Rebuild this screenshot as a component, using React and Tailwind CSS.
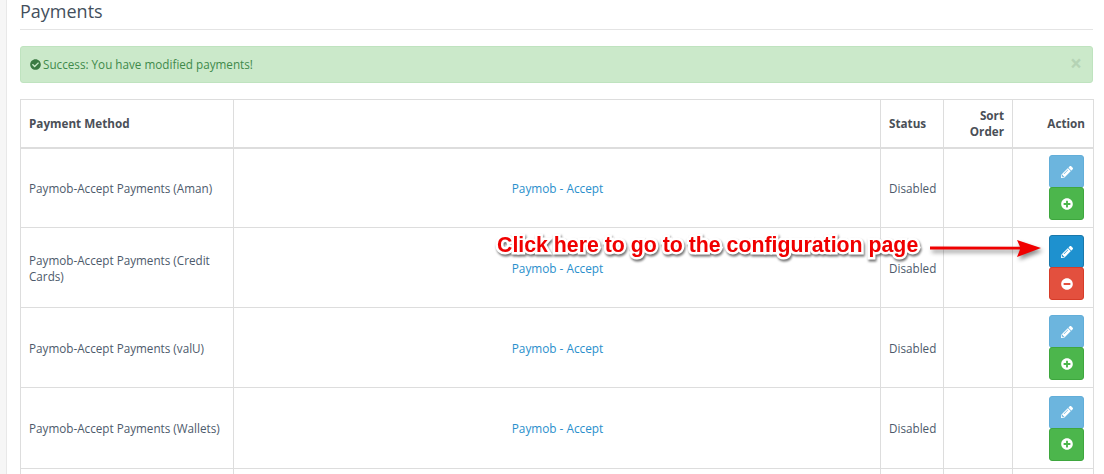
import React from "react";
import { FaPencilAlt, FaPlusCircle, FaMinusCircle, FaCheckCircle } from "react-icons/fa";

const cell = "border border-[#dddddd] px-2 py-[6px] align-middle";
const low = "border border-[#dddddd] px-2 pt-[8px] pb-[6px] align-middle";

function Btn({ tone, icon: Icon, size = 12 }) {
  const tones = {
    light: "bg-[#6cb5de] border-[#62aed9]",
    blue: "bg-[#1e91cf] border-[#1978ab]",
    green: "bg-[#4cb64c] border-[#3ea73e]",
    red: "bg-[#e3503e] border-[#d63c29]",
  };
  return (
    <div className={`flex h-[33px] w-[35px] items-center justify-center rounded-[3px] border text-white ${tones[tone]} -mt-px first:mt-0`}>
      <Icon size={size} />
    </div>
  );
}

function Row({ name, active, h }) {
  return (
    <tr style={{ height: h }}>
      <td className={`${cell} leading-[16px]`}>{name}</td>
      <td className={`${low} text-center text-[11.8px] text-[#2a8fcc]`}>
        <span className="pl-px">Paymob - Accept</span>
      </td>
      <td className={low}>Disabled</td>
      <td className={cell}></td>
      <td className="border border-[#dddddd] pl-2 pr-[9px] py-[6px] align-middle">
        <div className="flex flex-col items-end">
          <Btn tone={active ? "blue" : "light"} icon={FaPencilAlt} />
          <Btn tone={active ? "red" : "green"} icon={active ? FaMinusCircle : FaPlusCircle} />
        </div>
      </td>
    </tr>
  );
}

export default function App() {
  return (
    <div className="relative h-[474px] w-[1104px] overflow-hidden bg-white font-['Open_Sans',sans-serif] text-[11.7px] text-[#4d5a6b]">
      <div className="flex h-full">
        <div className="h-full w-[7px] shrink-0 border-r border-[#e8e8e8] bg-[#f6f6f6]"></div>
        <div className="min-w-0 flex-1 pl-[13px] pr-[11px]">
          <div className="h-[30px] border-b border-[#e4e4e4]">
            <h1 className="text-[18px] leading-[23px] font-normal text-[#444f5c]">Payments</h1>
          </div>
          <div className="mt-4 flex h-[37px] items-center justify-between rounded-[3px] border border-[#bfe3bf] bg-[#cbe9ca] pl-[9px] pr-[9px] text-[#3f8a4b]">
            <div className="flex items-center gap-[2px]">
              <FaCheckCircle size={11} className="text-[#3b7a43]" />
              <span>Success: You have modified payments!</span>
            </div>
            <span className="-mt-[2px] pr-px text-[21px] leading-none font-bold text-[#b5d3b5]">×</span>
          </div>
          <table className="mt-4 w-[1073px] table-fixed border-collapse">
            <colgroup>
              <col className="w-[213px]" />
              <col className="w-[647px]" />
              <col className="w-[63px]" />
              <col className="w-[69px]" />
              <col className="w-[81px]" />
            </colgroup>
            <thead>
              <tr className="h-[48px] font-bold text-[#4a4f57]">
                <th className={`${low} border-b-2 text-left`}>Payment Method</th>
                <th className={`${cell} border-b-2`}></th>
                <th className={`${low} border-b-2 text-left`}>Status</th>
                <th className={`${cell} border-b-2 text-right leading-[16px]`}>Sort Order</th>
                <th className={`${low} border-b-2 text-right`}>Action</th>
              </tr>
            </thead>
            <tbody>
              <Row h={80} name="Paymob-Accept Payments (Aman)" />
              <Row h={80} name="Paymob-Accept Payments (Credit Cards)" active />
              <Row h={80} name="Paymob-Accept Payments (valU)" />
              <Row h={81} name="Paymob-Accept Payments (Wallets)" />
              <tr className="h-[40px]">
                <td className={cell}></td>
                <td className={cell}></td>
                <td className={cell}></td>
                <td className={cell}></td>
                <td className={cell}></td>
              </tr>
            </tbody>
          </table>
        </div>
      </div>

      <div className="absolute left-[497px] top-[233px] whitespace-nowrap font-['Liberation_Sans',sans-serif] text-[21.3px] leading-[24px] font-bold text-[#f00000] [-webkit-text-stroke:5px_#ffffff] [paint-order:stroke_fill] drop-shadow-[1px_2px_1px_rgba(0,0,0,0.55)]">
        Click here to go to the configuration page
      </div>
      <svg className="absolute left-[928px] top-[236px] drop-shadow-[2px_3px_2px_rgba(0,0,0,0.45)]" width="120" height="26" viewBox="0 0 120 26">
        <path d="M2 10.6 L92 10.8 L89 4 L113 12 L89 21 L92 13.6 L2 13.4 Z" fill="#f00000" />
      </svg>
    </div>
  );
}
